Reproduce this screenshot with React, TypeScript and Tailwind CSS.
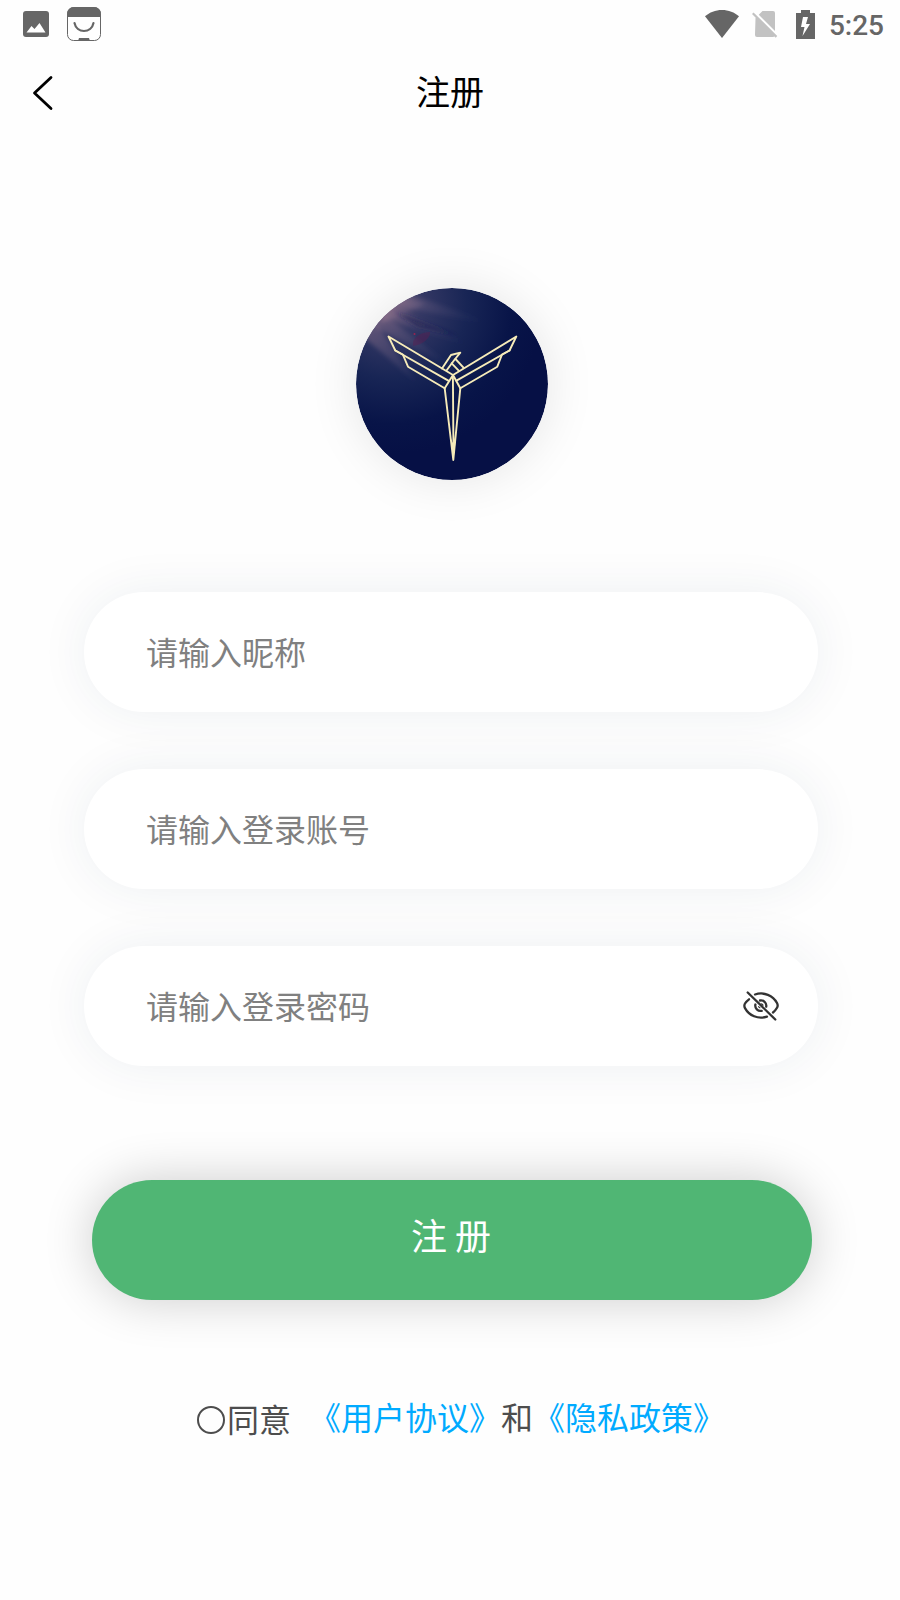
import React, { useState } from "react";

const StatusBar = () => {
  return (
    <div className="flex h-12 items-center justify-between pl-[23px] pr-4 text-[#666666]">
      <div className="flex items-center gap-[18px]">
        <svg width="26" height="26" viewBox="0 0 26 26" aria-hidden="true">
          <rect width="26" height="26" rx="3" fill="currentColor" />
          <path d="M3.500 21.500l5-6.500 3 3 5-6 6 9.500z" fill="#fff" />
        </svg>
        <svg width="34" height="34" viewBox="0 0 34 34" aria-hidden="true">
          <rect
            x=".5"
            y=".5"
            width="33"
            height="33"
            rx="6"
            fill="#fff"
            stroke="currentColor"
          />
          <path
            d="M0 10V7a7 7 0 0 1 7-7h20a7 7 0 0 1 7 7v3zM11 34l1-3h10l1 3z"
            fill="currentColor"
          />
          <path
            d="M7.500 16c1 5 5 8 9.500 8s8.500-3 9.500-8"
            fill="none"
            stroke="currentColor"
            strokeWidth="2.200"
            strokeLinecap="round"
          />
        </svg>
      </div>
      <div className="flex items-center">
        <svg width="34" height="28" viewBox="0 0 34 28" aria-hidden="true">
          <path d="M0 6.300C4.500 2.300 10.500 0 17 0s12.500 2.300 17 6.300L17 28z" fill="currentColor" />
        </svg>
        <svg
          className="ml-[13px]"
          width="26"
          height="28"
          viewBox="0 0 26 28"
          aria-hidden="true"
        >
          <path
            d="M3.500 8L10.500 1H21a2 2 0 0 1 2 2v22a2 2 0 0 1-2 2H5a2 2 0 0 1-2-2z"
            fill="#c2c2c2"
          />
          <path d="M2.500 2.500L25 25" stroke="#fff" strokeWidth="3" />
          <path d="M.8 3.200L24.500 26.900" stroke="#c2c2c2" strokeWidth="2.200" />
        </svg>
        <svg
          className="ml-[18px]"
          width="19"
          height="29"
          viewBox="0 0 19 29"
          aria-hidden="true"
        >
          <path d="M0 3h5V0h9v3h5v26H0z" fill="currentColor" />
          <path d="M12 7H7L5 17h3.500l-2 9L14 14h-4z" fill="#fff" />
        </svg>
        <span className="ml-[14px] pt-1 font-[Roboto,sans-serif] text-[28px] font-medium leading-8">
          5:25
        </span>
      </div>
    </div>
  );
};

const BirdLogo = () => {
  return (
    <svg
      className="size-48 rounded-full shadow-[0_0_50px_rgba(0,0,0,0.1)]"
      viewBox="0 0 192 192"
      role="img"
      aria-label="logo"
    >
      <defs>
        <radialGradient id="sky" cx="36" cy="16" r="150" gradientUnits="userSpaceOnUse">
          <stop offset="0" stopColor="#5c4f72" />
          <stop offset=".2" stopColor="#343864" />
          <stop offset=".5" stopColor="#182555" />
          <stop offset=".8" stopColor="#081448" />
          <stop offset="1" stopColor="#061045" />
        </radialGradient>
        <linearGradient id="ray" x1="28" y1="18" x2="110" y2="65" gradientUnits="userSpaceOnUse">
          <stop offset="0" stopColor="#b48a9c" stopOpacity=".32" />
          <stop offset="1" stopColor="#5a5f88" stopOpacity="0" />
        </linearGradient>
        <filter id="soft" x="-20%" y="-20%" width="140%" height="140%">
          <feGaussianBlur stdDeviation="2" />
        </filter>
        <clipPath id="disc">
          <circle cx="96" cy="96" r="96" />
        </clipPath>
      </defs>
      <g clipPath="url(#disc)">
        <rect width="192" height="192" fill="url(#sky)" />
        <g fill="url(#ray)" filter="url(#soft)">
          <path d="M36 0l114 40-108-22z" />
          <path d="M20 10l100 50-92-30z" />
          <path d="M14 16l84 64-78-40z" />
          <path d="M10 20l50 74-58-50z" />
          <path d="M30 2l40 14-46 20z" />
        </g>
        <path
          d="M36 22l66 26-40-9z"
          fill="#1a1f50"
          fillOpacity=".6"
          filter="url(#soft)"
        />
        <path
          d="M57 54c2-6 9-10 17-10 1 6-8 13-17 14z"
          fill="#5b1d50"
          fillOpacity=".45"
        />
        <circle cx="58.500" cy="46" r="1" fill="#9c2350" />
      </g>
      <g
        fill="none"
        stroke="#f6ebb9"
        strokeWidth="1.900"
        strokeLinejoin="round"
        strokeLinecap="round"
      >
        <path d="M97 87L32.500 48.500l6.800 14 7.500 4L52 78.700l36.700 21.600z" />
        <path d="M39.300 62.500l53 30.200" />
        <path d="M97 87l63.300-38.500-6.800 14-7.500 4-4.700 12.200-37 21.600z" />
        <path d="M153.500 62.500l-53 30.200" />
        <path d="M88.700 100.300L97.300 172l7-71.700M96.900 87l.5 68" />
        <path d="M86 80.500l9-13.500 9.300-2.300-6 7.300-7.600 10.200" />
        <path d="M99.500 71l8 8.700M95.700 75.300l7 7.400" />
      </g>
      <path d="M94.500 150L97.300 173l2.700-23-2.700 6z" fill="#f6ebb9" />
    </svg>
  );
};

type FieldProps = {
  id: string;
  label: string;
  type?: string;
  value: string;
  onChange: (value: string) => void;
  children?: React.ReactNode;
};

const Field = ({ id, label, type = "text", value, onChange, children }: FieldProps) => {
  return (
    <div className="flex h-[120px] items-center rounded-full bg-white pl-[62px] pr-[38px] shadow-[0_0_50px_rgba(30,60,90,0.07)]">
      <input
        id={id}
        type={type}
        value={value}
        placeholder={label}
        aria-label={label}
        onChange={(e) => onChange(e.target.value)}
        className="h-full min-w-0 flex-1 bg-transparent pb-[3px] text-[32px] leading-[60px] text-[#333333] outline-none placeholder:text-[#808080]"
      />
      {children}
    </div>
  );
};

const App = () => {
  const [form, setForm] = useState({ nickname: "", account: "", password: "" });
  const [showPassword, setShowPassword] = useState(false);
  const [agreed, setAgreed] = useState(false);

  return (
    <div
      lang="zh-CN"
      className="min-h-screen bg-[#fefefe] font-['Noto_Sans_CJK_SC',sans-serif]"
    >
      <StatusBar />
      <header className="grid h-[90px] grid-cols-[1fr_auto_1fr] items-center px-8">
        <button type="button" aria-label="返回" className="justify-self-start">
          <svg width="22" height="36" viewBox="0 0 22 36" aria-hidden="true">
            <path
              d="M19 2.500L2.500 18 19 33.500"
              fill="none"
              stroke="#000"
              strokeWidth="2.800"
              strokeLinecap="round"
              strokeLinejoin="round"
            />
          </svg>
        </button>
        <h1 className="pb-1 text-[34px] leading-[50px] text-black">注册</h1>
      </header>

      <main className="pt-[150px]">
        <div className="flex justify-center pl-1">
          <BirdLogo />
        </div>

        <form onSubmit={(e) => e.preventDefault()}>
          <div className="mt-28 flex flex-col gap-[57px] pl-[84px] pr-[82px]">
            <Field
              id="nickname"
              label="请输入昵称"
              value={form.nickname}
              onChange={(nickname) => setForm({ ...form, nickname })}
            />
            <Field
              id="account"
              label="请输入登录账号"
              value={form.account}
              onChange={(account) => setForm({ ...form, account })}
            />
            <Field
              id="password"
              label="请输入登录密码"
              type={showPassword ? "text" : "password"}
              value={form.password}
              onChange={(password) => setForm({ ...form, password })}
            >
              <button
                type="button"
                aria-label="显示密码"
                onClick={() => setShowPassword(!showPassword)}
              >
                <svg
                  width="38"
                  height="30"
                  viewBox="0 0 38 30"
                  fill="none"
                  stroke="#333"
                  strokeWidth="2.300"
                  strokeLinecap="round"
                  aria-hidden="true"
                >
                  <path d="M5.700 1.500l27.600 27" />
                  <path d="M13 3.500c9-3 18 1 22 8.500 1 1.800 1 3 0 4.800-1 1.800-2.300 3.300-4 4.700" />
                  <path d="M7 8.300C5 9.800 4 10.800 3 12.500c-1 1.800-1 2.800 0 4.600 4 7.400 13 11.500 22 8.500" />
                  <path d="M18 9.500a5.300 5.300 0 0 1 6.200 6.200M13.400 13.500a5.300 5.300 0 0 0 6.300 6.300" />
                  <path d="M19.500 12.800a2 2 0 0 1 1.500 1.500M16.700 15.600a2 2 0 0 0 1.200 1.200" strokeWidth="1.200" />
                </svg>
              </button>
            </Field>
          </div>

          <div className="mt-[114px] pl-[92px] pr-[88px]">
            <button
              type="submit"
              className="flex h-[120px] w-full items-center justify-center rounded-full bg-[#50b674] pb-3 pr-[2px] text-[36px] leading-[52px] text-white shadow-[0_0_50px_rgba(0,0,0,0.2)]"
            >
              注 册
            </button>
          </div>

          <div className="mt-[90px] flex items-center justify-center pl-[22px] text-[32px] leading-[48px] text-[#4d4d4d]">
            <label className="mr-[18px] flex items-center gap-[2px] pt-1">
              <input
                type="checkbox"
                checked={agreed}
                onChange={(e) => setAgreed(e.target.checked)}
                className="mt-1 size-7 appearance-none rounded-full border-2 border-[#4d4d4d] checked:bg-[#50b674]"
              />
              同意
            </label>
            <a href="#terms" className="text-[#00aaff]">
              《用户协议》
            </a>
            和
            <a href="#privacy" className="text-[#00aaff]">
              《隐私政策》
            </a>
          </div>
        </form>
      </main>
    </div>
  );
};

export default App;
